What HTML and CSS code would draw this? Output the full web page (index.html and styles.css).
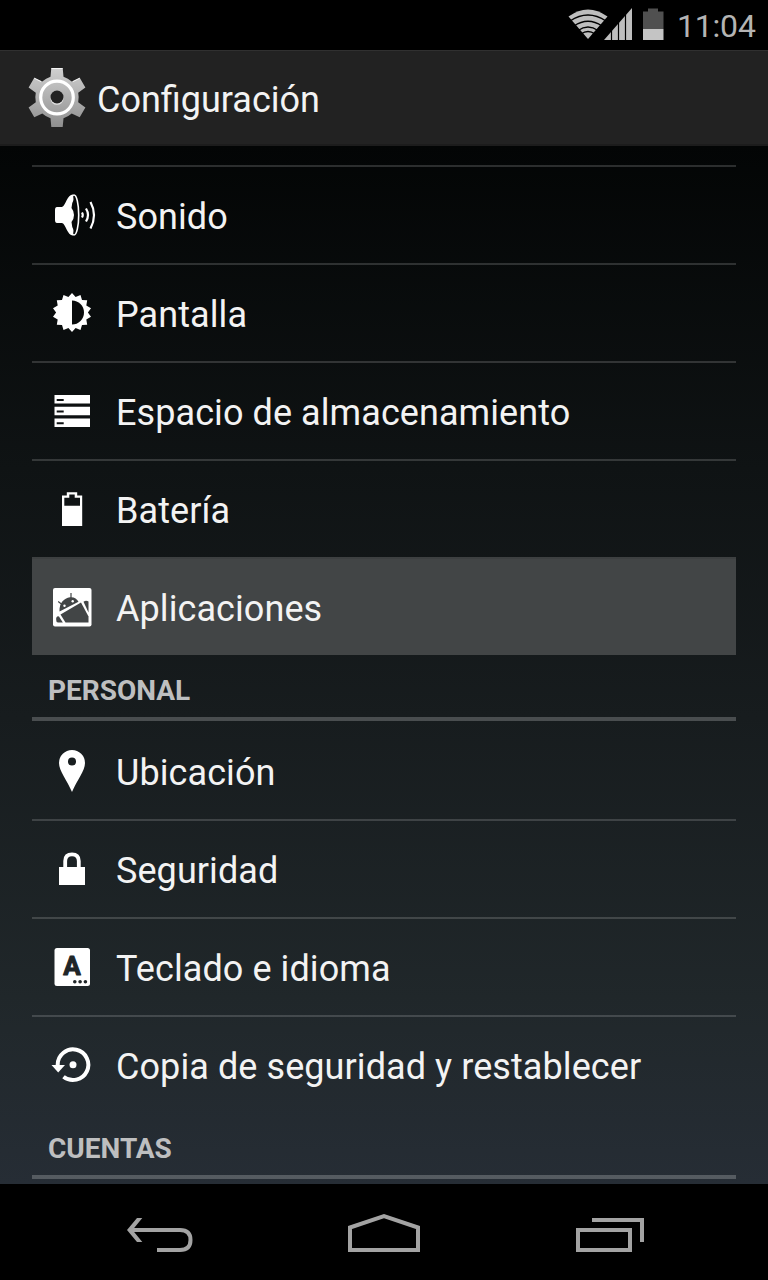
FILE: index.html
```html
<!DOCTYPE html>
<html lang="es">
<head>
    <meta charset="UTF-8">
    <meta name="viewport" content="width=device-width, initial-scale=1.0">
    <title>Configuración</title>
    <link rel="stylesheet" href="styles.css">
</head>
<body>
    <div class="status-bar">
        <svg class="status-icons" width="100" height="50" viewBox="0 0 100 50">
            <!-- wifi -->
            <path fill="#bebebe" d="M.5 16.500Q20 2.500 39.500 16.500L20 39Z"/>
            <g fill="none" stroke="#000" stroke-width="1.400">
                <path d="M2 21Q20 9 38 21"/>
                <path d="M6 26Q20 16.500 34 26"/>
                <path d="M10 30.500Q20 23.500 30 30.500"/>
                <path d="M13 34Q20 29 27 34"/>
            </g>
            <!-- señal -->
            <path fill="#bebebe" d="M36 40L64 8V40Z"/>
            <path stroke="#000" stroke-width="1.200" d="M43.500 28V40M50.500 20V40M57.500 12V40"/>
            <!-- batería -->
            <path fill="#505050" d="M75 11.500H80V8.500H90V11.500H95.500V29H75Z"/>
            <path fill="#c4c4c4" d="M75 29H95.500V40H75Z"/>
        </svg>
        <span class="clock">11:04</span>
    </div>

    <header class="action-bar">
        <svg class="gear" width="64" height="64" viewBox="0 0 64 64">
            <defs>
                <linearGradient id="metal" gradientUnits="userSpaceOnUse" x1="0" y1="2" x2="0" y2="62">
                    <stop offset="0" stop-color="#d0d0d0"/>
                    <stop offset="1" stop-color="#8e8e8e"/>
                </linearGradient>
            </defs>
            <path fill="url(#metal)" d="M26.300 2H37.700L38.500 10.800A22 22 0 0 1 46.700 15.500L54.700 11.800L60.400 21.600L53.200 26.800A22 22 0 0 1 53.200 36.200L60.400 41.400L54.700 51.200L46.700 47.500A22 22 0 0 1 38.500 52.200L37.700 61H26.300L25.500 52.200A22 22 0 0 1 17.300 47.500L9.300 51.200L3.600 41.400L10.800 36.200A22 22 0 0 1 10.800 26.800L3.600 21.600L9.300 11.800L17.300 15.500A22 22 0 0 1 25.500 10.800Z"/>
            <path fill="none" stroke="#f4f4f4" stroke-width="1" d="M26.500 2.500H37.500M9.300 12.200L16 15.600M48 15.600L54.700 12.200"/>
            <circle cx="32" cy="31.500" r="16.300" fill="none" stroke="#fff" stroke-width="3.200"/>
            <circle cx="32" cy="32.300" r="6.500" fill="#e4e4e4"/>
            <circle cx="32" cy="31" r="6.500" fill="#222"/>
        </svg>
        <h1 class="title">Configuración</h1>
    </header>

    <main class="settings">
        <ul class="list">
            <li class="row">
                <svg class="icon" viewBox="0 0 48 48">
                    <path d="M9 16H14C18 14 19 3.500 25 3.500L27 24L25 44.500C19 44.500 18 33 14 32H9Q7 32 7 29V19Q7 16 9 16Z"/>
                    <ellipse class="line" cx="26" cy="24" rx="4.700" ry="20" stroke-width="1.600"/>
                    <path fill="#080a0a" d="M26.500 7Q30.500 24 26.500 41Q23.500 36 23.500 31Q26 28 26 24T23.500 17Q23.500 12 26.500 7Z"/>
                    <path class="line" stroke-width="2.200" d="M34 21.500Q35.500 24 34 26.500M38 17.500Q42 24 38 30.500M42.500 11Q49.500 24 42.500 37.500"/>
                </svg>
                <span class="label">Sonido</span>
            </li>
            <li class="row">
                <svg class="icon" viewBox="0 0 48 48">
                    <path d="M24 4L27.600 8L32.500 5.900L34 11.100L39.200 11.300L38.300 16.600L43 19.200L39.900 23.500L43 27.800L38.300 30.400L39.200 35.700L34 35.900L32.500 41.100L27.600 39L24 43L20.400 39L15.500 41.100L14 35.900L8.800 35.700L9.700 30.400L5 27.800L8.100 23.500L5 19.200L9.700 16.600L8.800 11.300L14 11.100L15.500 5.900L20.400 8Z"/>
                    <path fill="#090b0c" d="M24 11.500A12 12 0 0 1 24 35.500Z"/>
                </svg>
                <span class="label">Pantalla</span>
            </li>
            <li class="row">
                <svg class="icon" viewBox="0 0 48 48">
                    <path fill-rule="evenodd" d="M6.500 8H42V16.500H6.500ZM8.700 12V14H15.700V12ZM6.500 19.700H42V28.200H6.500ZM8.700 23.500V25.500H15.700V23.500ZM6.500 31.400H42V39.900H6.500ZM8.700 35.200V37.200H15.700V35.200Z"/>
                </svg>
                <span class="label">Espacio de almacenamiento</span>
            </li>
            <li class="row">
                <svg class="icon" viewBox="0 0 48 48">
                    <path fill-rule="evenodd" d="M14 10.500H18.800V7.300H29.200V10.500H34.200V41H14ZM16.300 12.800V20.700H32V12.800H26.700V9.600H21.300V12.800Z"/>
                </svg>
                <span class="label">Batería</span>
            </li>
            <li class="row pressed">
                <svg class="icon" viewBox="0 0 48 48">
                    <rect x="5" y="5" width="38.500" height="38.500" rx="2"/>
                    <g fill="#424546">
                        <path d="M11.500 28.500C11 20 16 15 22 14.200C26 13.800 29 15.500 30.500 18.700Z"/>
                        <path d="M12.500 31.500L33 19.500L40.500 33.500V39.500H17.500Z"/>
                        <path d="M8.200 35Q9 32.500 11 33.500L14.800 39.500H10Q8.200 39.500 8.200 37Z"/>
                        <path d="M35.500 18.800Q38 16.800 40.500 18.500V29.500Z"/>
                        <path stroke="#424546" stroke-width="1.200" d="M23 10V15M10.200 18.500L14 21.500"/>
                    </g>
                    <circle cx="16.500" cy="22.700" r="1.200"/>
                    <circle cx="24.700" cy="18.300" r="1.200"/>
                </svg>
                <span class="label">Aplicaciones</span>
            </li>
        </ul>

        <h2 class="section">PERSONAL</h2>
        <ul class="list">
            <li class="row">
                <svg class="icon" viewBox="0 0 48 48">
                    <path fill-rule="evenodd" d="M24 3A13 13 0 0 1 37 16C37 24 29 33 24 45C19 33 11 24 11 16A13 13 0 0 1 24 3ZM24 10.500A4 4 0 0 0 24 18.500A4 4 0 0 0 24 10.500Z"/>
                </svg>
                <span class="label">Ubicación</span>
            </li>
            <li class="row">
                <svg class="icon" viewBox="0 0 48 48">
                    <path d="M11 22H37V40H11Z"/>
                    <path class="line" stroke-width="3.800" d="M17.200 23V16Q17.200 9.300 24 9.300T30.800 16V23"/>
                </svg>
                <span class="label">Seguridad</span>
            </li>
            <li class="row">
                <svg class="icon" viewBox="0 0 48 48">
                    <rect x="6.500" y="5" width="35.500" height="38" rx="2.500"/>
                    <text class="key" x="24" y="32" text-anchor="middle">A</text>
                    <g fill="#202628">
                        <circle cx="26.800" cy="38.700" r="1.800"/>
                        <circle cx="32.100" cy="38.700" r="1.800"/>
                        <circle cx="37.400" cy="38.700" r="1.800"/>
                    </g>
                </svg>
                <span class="label">Teclado e idioma</span>
            </li>
            <li class="row">
                <svg class="icon" viewBox="0 0 48 48">
                    <path class="line" stroke-width="4" d="M9.700 25V23.700A15.300 15.300 0 1 1 15.500 35.700"/>
                    <path d="M3.500 24H17L10.200 31.500Z"/>
                    <circle cx="25" cy="23.700" r="3.500"/>
                </svg>
                <span class="label">Copia de seguridad y restablecer</span>
            </li>
        </ul>

        <h2 class="section">CUENTAS</h2>
    </main>

    <nav class="nav-bar">
        <svg class="nav-icon" viewBox="0 0 80 48">
            <path d="M9 18H60Q70.500 18 70.500 28T60 38H37"/>
            <path class="arrow" d="M17 6H22.300L12.500 18L22.300 30H17L7 18Z"/>
        </svg>
        <svg class="nav-icon" viewBox="0 0 80 48">
            <path d="M6 38V15.500L40 4.200L74 15.500V38Z"/>
        </svg>
        <svg class="nav-icon" viewBox="0 0 80 48">
            <path d="M10 18H62V38H10ZM24 8H74V30"/>
        </svg>
    </nav>
</body>
</html>
```
FILE: styles.css
```css
* {
    box-sizing: border-box;
}
body {
    display: flex;
    flex-direction: column;
    height: 1280px;
    margin: 0;
    overflow: hidden;
    background-color: #000;
    color: #f3f3f3;
    font-family: Roboto, "Noto Sans", sans-serif;
}
.status-bar {
    display: flex;
    align-items: center;
    justify-content: flex-end;
    height: 50px;
    padding-right: 12px;
}
.clock {
    width: 79px;
    margin-left: 9px;
    padding-top: 2px;
    color: #b4b4b4;
    font-size: 32px;
    font-weight: 400;
    letter-spacing: -0.2px;
}
.action-bar {
    display: flex;
    align-items: center;
    height: 96px;
    padding-left: 25px;
    border-top: 1px solid #303030;
    border-bottom: 2px solid #1c1c1c;
    background-color: #222;
}
.title {
    margin: 4px 0 0 8px;
    font-size: 36px;
    font-weight: 400;
}
.settings {
    flex: 1;
    padding: 19px 32px 0;
    overflow: hidden;
    background: linear-gradient(#030505, #0f1314 31%, #171c1e 55%, #20272a 82%, #262d35);
}
.list {
    margin: 0;
    padding: 0;
    list-style: none;
}
.row {
    display: flex;
    align-items: center;
    height: 98px;
    padding-left: 16px;
    border-top: 2px solid rgba(255, 255, 255, 0.16);
}
.section + .list .row:first-child {
    border-top-color: transparent;
}
.pressed {
    border-top-color: #3d4041;
    background-color: #424546;
}
.icon {
    width: 48px;
    height: 48px;
    fill: #fff;
}
.icon .line {
    fill: none;
    stroke: #fff;
}
.key {
    fill: #202628;
    stroke: #202628;
    stroke-width: 1px;
    stroke-linejoin: round;
    font: bold 26px Roboto, sans-serif;
}
.label {
    margin: 4px 0 0 20px;
    font-size: 36px;
    letter-spacing: 0.08px;
    white-space: nowrap;
}
.section {
    height: 66px;
    margin: 0;
    padding: 6px 16px 0;
    border-bottom: 4px solid rgba(255, 255, 255, 0.22);
    color: #bebfc0;
    font-size: 28px;
    font-weight: 700;
    line-height: 60px;
}
.nav-bar {
    display: flex;
    justify-content: space-between;
    height: 96px;
    padding: 28px 120px 0;
}
.nav-icon {
    width: 80px;
    height: 48px;
    fill: none;
    stroke: #a3a3a3;
    stroke-width: 4px;
}
.nav-icon .arrow {
    fill: #a3a3a3;
    stroke: none;
}
```
